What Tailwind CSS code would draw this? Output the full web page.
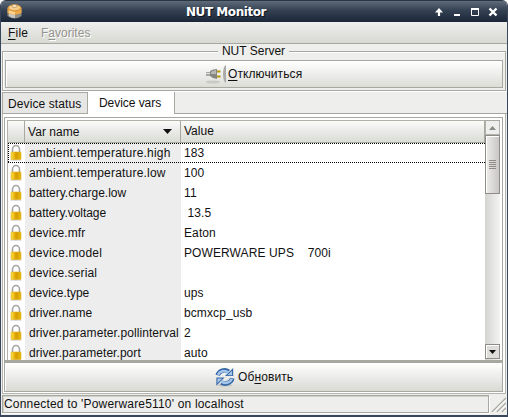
<!DOCTYPE html>
<html lang="ru">
<head>
<meta charset="utf-8">
<title>NUT Monitor</title>
<script src="https://cdn.jsdelivr.net/npm/@tailwindcss/browser@4"></script>
</head>
<body class="w-[508px] h-[417px] overflow-hidden bg-white font-['Liberation_Sans',Arial,sans-serif] text-[12px] leading-[20px] text-[#111]">
<svg class="absolute w-0 h-0">
  <defs>
    <linearGradient id="gold" x1="0" x2="1" y1="0" y2="0"><stop offset="0" stop-color="#f8dc58"/><stop offset=".25" stop-color="#f2c41c"/><stop offset=".5" stop-color="#d69a00"/><stop offset="1" stop-color="#e8b80c"/></linearGradient>
    <symbol id="lock" viewBox="0 0 16 20">
      <ellipse cx="8" cy="17" rx="6" ry="1" fill="#ddd"/>
      <path d="M4.500 9V6.500a3.500 4 0 0 1 7 0V9" fill="none" stroke="#a3a3a3" stroke-width="1.600"/>
      <rect x="3" y="9" width="10" height="7.500" rx=".8" fill="url(#gold)" stroke="#dfb21c" stroke-width=".6"/>
    </symbol>
  </defs>
</svg>
<div class="flex flex-col w-[508px] h-[417px] border-x border-[#3a475a] rounded-t-[6px] overflow-hidden bg-[#eeeeec]">
  <!-- title bar -->
  <div class="h-[22px] shrink-0 relative flex items-center justify-end bg-linear-to-b from-[#5f6b79] via-[#344152] via-45% to-[#1b2739] border-t border-[#2b3645]">
    <svg class="absolute left-[6px] top-[2px]" width="15" height="17" viewBox="0 0 15 17">
      <path d="M0.500 7h14v6q-7 5-14 0z" fill="#8c8b86"/><path d="M2 10h6v5q-4 0-6-2z" fill="#c9c8c3"/>
      <path d="M.5 5v5q7 3.500 14 0V5z" fill="#eda847"/><path d="M2 6v4q3 1.500 6 1.400V7z" fill="#fbd28f"/>
      <ellipse cx="7.500" cy="5" rx="7" ry="3.700" fill="#d9963c"/><ellipse cx="7.500" cy="4.800" rx="5.700" ry="2.500" fill="#f5cd8a"/>
      <ellipse cx="7.500" cy="3" rx="2.500" ry="1.600" fill="#f7e3bd" stroke="#a98653" stroke-width=".6"/>
    </svg>
    <div class="absolute left-[185px] top-[1px] whitespace-nowrap font-['DejaVu_Sans',sans-serif] font-bold text-[12px] text-white tracking-[-.45px] [text-shadow:1px_1px_0_#0b1420]">NUT Monitor</div>
    <svg class="mt-[1px]" width="76" height="14" viewBox="431 5 76 14" fill="none" stroke="#fff" stroke-width="2">
      <path d="M439 16V10" stroke-width="2.200"/><path d="M435 12.500 439 8l4 4.500z" fill="#fff" stroke="none"/>
      <path d="M454 15h6"/><path d="M471.500 8.500h7v7h-7z" stroke-width="1"/><path d="M471 9h8"/>
      <path d="M489.500 8.500l7 7M496.500 8.500l-7 7" stroke-width="2.400"/>
    </svg>
  </div>
  <!-- menu bar -->
  <div class="h-[22px] shrink-0 flex items-center pl-[7px] gap-[12px] bg-linear-to-b from-[#efefed] to-[#d7d9d2] border-b border-[#a7a89f]">
    <span class="w-[21px] whitespace-nowrap tracking-[.2px]"><u class="underline-offset-2">F</u>ile</span>
    <span class="text-[#94948f] tracking-[0px] [text-shadow:1px_1px_0_#fff]">F<u class="underline-offset-2">a</u>vorites</span>
  </div>
  <!-- server group -->
  <div class="h-[48px] shrink-0 relative pt-[7px]">
    <div class="h-[40px] mx-[1px] border-[#a7a89f] border pt-[8px] px-[2px] [box-shadow:inset_1px_1px_0_#fff,0_1px_0_#fff]">
      <div class="h-[28px] border border-[#a7a89f] bg-linear-to-b from-white to-[#dcddd7] flex items-center pl-[199px] [box-shadow:inset_1px_1px_0_#fff]">
        <svg width="23" height="24" viewBox="205 62 23 24">
          <ellipse cx="213" cy="82" rx="7" ry="1.600" fill="#c9c9c5"/>
          <path d="M206 72h4v4h-4z" fill="#a8a8a5"/><path d="M206 73.500h5" stroke="#e0e0de"/>
          <path d="M210 71q3-2 7-2v10q-4 0-7-3z" fill="#858581"/><path d="M211 72q3-2 5-2v4h-5z" fill="#b7b7b4"/>
          <path d="M217 71.500h3.500M217 76.500h3.500" stroke="#b79809" stroke-width="2.200"/>
          <path d="M226 65q-3 2-3 9t3 9z" fill="#aaa"/>
        </svg>
        <span class="tracking-[.1px] whitespace-nowrap"><u class="underline-offset-2">О</u>тключиться</span>
      </div>
    </div>
    <div class="absolute left-[217px] top-[-3px] w-[71px] h-[20px] text-center bg-[#eeeeec] whitespace-nowrap tracking-[0px] [clip-path:inset(3px_0_3px_0)]">NUT Server</div>
  </div>
  <!-- tabs -->
  <div class="h-[22px] shrink-0 flex items-end ml-[1px]">
    <div class="w-[85px] h-[22px] pt-[1px] pl-[5px] bg-[#e6e6e4] border-t border-b border-l border-[#a7a89f] whitespace-nowrap tracking-[.1px]">Device status</div>
    <div class="w-[88px] h-[22px] pl-[11px] bg-white border-x border-[#a7a89f] leading-[22px] whitespace-nowrap tracking-[-.05px]">Device vars</div>
    <div class="flex-1 h-[22px] border-b border-[#a7a89f]"></div>
  </div>
  <!-- notebook page -->
  <div class="h-[280px] shrink-0 flex flex-col ml-[1px] mr-[1px] pl-[1px] pr-[2px] pt-[3px] bg-white border-x border-b border-[#b4b5ae]">
    <div class="h-[245px] shrink-0 flex flex-row border border-b-2 border-[#a7a89f] p-[2px] pb-0">
      <div class="flex-1 flex flex-col overflow-hidden border-l border-t border-[#b0b1a9]">
        <div class="h-[22px] shrink-0 flex border-b border-[#a7a89f] bg-linear-to-b from-[#fbfbfa] to-[#d9dbd4] leading-[20px]">
          <div class="w-[17px] border-r border-[#a7a89f]"></div>
          <div class="w-[156px] pl-[3px] pr-[8px] flex items-center justify-between border-r border-[#a7a89f] tracking-[.05px]">Var name
            <svg width="9" height="5" viewBox="0 0 9 5"><path d="M0 0h9L4.500 5z" fill="#111"/></svg></div>
          <div class="flex-1 pl-[3px] border-r border-[#a7a89f] tracking-[0px]">Value</div>
        </div>
        <div id="rows" class="relative flex-1 overflow-hidden"></div>
      </div>
      <!-- scroll bar -->
      <div class="w-[15px] shrink-0 flex flex-col border-t border-[#a7a89f] bg-linear-to-r from-[#d4d4d0] to-[#f4f4f3]">
        <div class="h-[14px] flex items-center justify-center bg-[#eeeeec] border-x border-b border-[#b0b1a9]"><svg width="7" height="4"><path d="M0 4h7L3.500 0z" fill="#888a85"/></svg></div>
        <div class="h-[59px] flex flex-col items-center justify-center gap-[1px] border border-[#8f8c88] bg-linear-to-r from-[#eeedeb] to-[#c9c6c3] [box-shadow:inset_1px_1px_0_#fff]">
          <i class="w-[7px] h-px bg-[#8f8c88]"></i><i class="w-[7px] h-px bg-[#8f8c88]"></i><i class="w-[7px] h-px bg-[#8f8c88]"></i><i class="w-[7px] h-px bg-[#8f8c88]"></i><i class="w-[7px] h-px bg-[#8f8c88]"></i>
        </div>
        <div class="flex-1"></div>
        <div class="h-[15px] mb-[1px] flex items-center justify-center bg-[#deddda] border border-[#8f8c88] [box-shadow:inset_1px_1px_0_#fff]"><svg width="7" height="4"><path d="M0 0h7L3.500 4z" fill="#111"/></svg></div>
      </div>
    </div>
    <div class="h-[30px] shrink-0 border border-[#a7a89f] bg-linear-to-b from-white to-[#d9dad4] flex items-center pl-[210px] [box-shadow:inset_1px_1px_0_#fff]">
      <svg width="20" height="20" viewBox="0 0 22 22">
        <ellipse cx="11" cy="20" rx="8" ry="1.500" fill="#c4c5c1"/>
        <path d="M3 9C4 5 10 1.500 15 5" fill="none" stroke="#3567a6" stroke-width="5"/><path d="M20 1v9h-9z" fill="#3567a6"/>
        <path d="M3.200 8.500C5 5 10 2.500 15 6" fill="none" stroke="#a3c5ea" stroke-width="2.800"/><path d="M18.800 3.800V9H13.500z" fill="#a3c5ea"/>
        <path d="M19 12.500C18 17 12 20 7 17" fill="none" stroke="#3567a6" stroke-width="5"/><path d="M1.500 20.500v-9h9z" fill="#3567a6"/>
        <path d="M18.500 13C17 17 12 19 7 16" fill="none" stroke="#a3c5ea" stroke-width="2.800"/><path d="M2.700 17.800v-5.200H8z" fill="#a3c5ea"/>
      </svg>
      <span class="pl-[3px] whitespace-nowrap tracking-[.1px]">Об<u class="underline-offset-2">н</u>овить</span>
    </div>
  </div>
  <!-- status bar -->
  <div class="flex-1 flex pt-[1px] border-b-2 border-[#3a475a] pl-[1px]">
    <div class="w-[487px] h-[18px] pl-px leading-[17px] border border-[#a7a89f] [box-shadow:inset_1px_1px_0_#d0d0cc,1px_1px_0_#fff] whitespace-nowrap tracking-[.18px]">Connected to 'Powerware5110' on localhost</div>
    <svg class="ml-[2px] mt-[2px]" width="15" height="15" fill="none"><path d="M1 15 15 1M6 15l9-9M11 15l4-4" stroke="#a7a89f" stroke-width="1.500"/><path d="M2.500 15 15 2.500M7.500 15 15 7.500M12.500 15 15 12.500" stroke="#fff"/></svg>
  </div>
</div>
<script>
const data = [
  ["ambient.temperature.high","183","tracking-[.2px]"],
  ["ambient.temperature.low","100","tracking-[.2px]"],
  ["battery.charge.low","11","tracking-[0px]"],
  ["battery.voltage"," 13.5","tracking-[-.05px]"],
  ["device.mfr","Eaton","tracking-[.1px]"],
  ["device.model","POWERWARE UPS    700i","tracking-[.2px]"],
  ["device.serial","","tracking-[.1px]"],
  ["device.type","ups","tracking-[-.05px]"],
  ["driver.name","bcmxcp_usb","tracking-[.05px]"],
  ["driver.parameter.pollinterval","2","tracking-[.08px]"],
  ["driver.parameter.port","auto","tracking-[.05px]"]];
document.getElementById("rows").innerHTML = data.map(([k,v,t]) => `<div class="h-[20px] flex whitespace-pre"><svg class="w-[16px] h-[20px] shrink-0"><use href="#lock"/></svg><div class="w-[156px] ml-px pl-[4px] bg-[#ededed] ${t}">${k}</div><div class="pl-[3px] tracking-[.1px]">${v}</div></div>`).join("")
 + '<svg class="absolute left-0 top-0" width="478" height="20" fill="none" stroke="#000" stroke-dasharray="1 1"><path d="M0 .5H478M0 19.500H478M.5 0V20M477.500 1V20"/></svg>';
</script>
</body>
</html>
